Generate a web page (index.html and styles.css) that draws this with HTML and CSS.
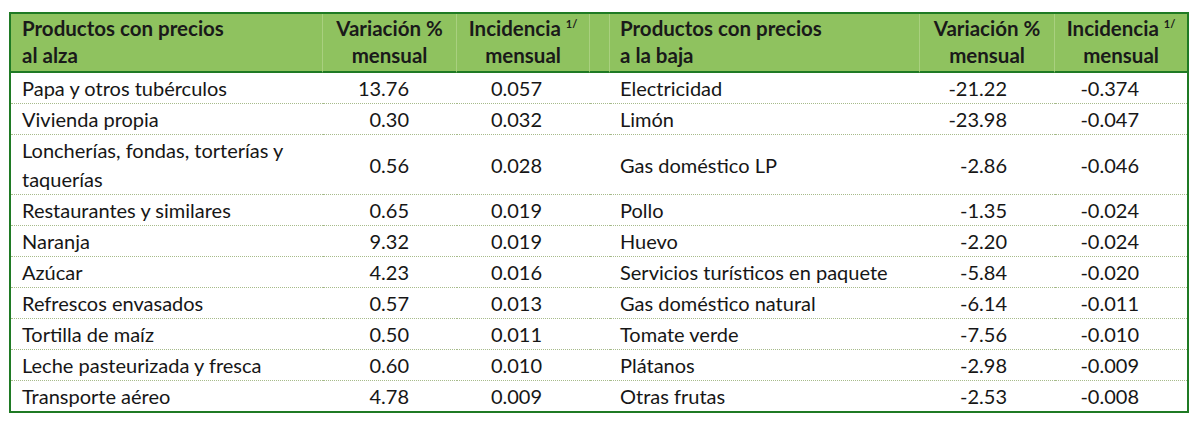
FILE: index.html
```html
<!DOCTYPE html>
<html lang="es">
<head>
<meta charset="utf-8">
<title>Productos con precios al alza y a la baja</title>
<link rel="stylesheet" href="styles.css">
</head>
<body>
<table class="tabla">
  <colgroup>
    <col class="c-prod">
    <col class="c-var">
    <col class="c-inc">
    <col class="c-gap">
    <col class="c-prod2">
    <col class="c-var2">
    <col class="c-inc2">
  </colgroup>
  <thead>
    <tr>
      <th class="h-left">Productos con precios<br>al alza</th>
      <th>Variación %<br>mensual</th>
      <th>Incidencia <sup>1/</sup><br>mensual</th>
      <th class="h-gap"></th>
      <th class="h-left">Productos con precios<br>a la baja</th>
      <th>Variación %<br>mensual</th>
      <th class="h-last">Incidencia <sup>1/</sup><br>mensual</th>
    </tr>
  </thead>
  <tbody>
    <tr><td class="p">Papa y otros tubérculos</td><td class="n">13.76</td><td class="n">0.057</td><td></td><td class="p">Electricidad</td><td class="n">-21.22</td><td class="n">-0.374</td></tr>
    <tr><td class="p">Vivienda propia</td><td class="n">0.30</td><td class="n">0.032</td><td></td><td class="p">Limón</td><td class="n">-23.98</td><td class="n">-0.047</td></tr>
    <tr><td class="p">Loncherías, fondas, torterías y<br>taquerías</td><td class="n">0.56</td><td class="n">0.028</td><td></td><td class="p">Gas doméstico LP</td><td class="n">-2.86</td><td class="n">-0.046</td></tr>
    <tr><td class="p">Restaurantes y similares</td><td class="n">0.65</td><td class="n">0.019</td><td></td><td class="p">Pollo</td><td class="n">-1.35</td><td class="n">-0.024</td></tr>
    <tr><td class="p">Naranja</td><td class="n">9.32</td><td class="n">0.019</td><td></td><td class="p">Huevo</td><td class="n">-2.20</td><td class="n">-0.024</td></tr>
    <tr><td class="p">Azúcar</td><td class="n">4.23</td><td class="n">0.016</td><td></td><td class="p">Servicios turísticos en paquete</td><td class="n">-5.84</td><td class="n">-0.020</td></tr>
    <tr><td class="p">Refrescos envasados</td><td class="n">0.57</td><td class="n">0.013</td><td></td><td class="p">Gas doméstico natural</td><td class="n">-6.14</td><td class="n">-0.011</td></tr>
    <tr><td class="p">Tortilla de maíz</td><td class="n">0.50</td><td class="n">0.011</td><td></td><td class="p">Tomate verde</td><td class="n">-7.56</td><td class="n">-0.010</td></tr>
    <tr><td class="p">Leche pasteurizada y fresca</td><td class="n">0.60</td><td class="n">0.010</td><td></td><td class="p">Plátanos</td><td class="n">-2.98</td><td class="n">-0.009</td></tr>
    <tr class="last"><td class="p">Transporte aéreo</td><td class="n">4.78</td><td class="n">0.009</td><td></td><td class="p">Otras frutas</td><td class="n">-2.53</td><td class="n">-0.008</td></tr>
  </tbody>
</table>
</body>
</html>
```

FILE: styles.css
```css
html, body {
  margin: 0;
  padding: 0;
  background: #ffffff;
}

body {
  padding: 12px 0 0 9px;
  font-family: "Lato", "Open Sans", sans-serif;
  color: #161616;
}

.tabla {
  width: 1180px;
  table-layout: fixed;
  border-collapse: separate;
  border-spacing: 0;
  border: 2px solid #1f7a24;
  font-size: 20px;
}

.c-prod { width: 312px; }
.c-var { width: 134px; }
.c-inc { width: 133px; }
.c-gap { width: 20px; }
.c-prod2 { width: 310px; }
.c-var2 { width: 135px; }
.c-inc2 { width: 132px; }

thead th {
  background: #8fc25f;
  font-size: 20.5px;
  font-weight: 700;
  line-height: 27px;
  padding: 1px 0 2px;
  text-align: center;
  color: #1a1a1a;
  border-bottom: 2px solid #1f7a24;
  border-right: 1px solid #a9d07f;
  vertical-align: middle;
}

thead th.h-last {
  border-right: 0;
}

thead th.h-left {
  text-align: left;
  padding-left: 11px;
}

thead th:nth-child(5).h-left {
  padding-left: 10px;
}

thead sup {
  font-size: 11px;
  line-height: 0;
  vertical-align: 8px;
}

tbody td {
  line-height: 29px;
  padding: 1px 0 0;
  border-bottom: 1px dotted #a7bb8b;
  vertical-align: middle;
  white-space: nowrap;
}

tbody tr.last td {
  border-bottom: 0;
}

td.p {
  padding-left: 11px;
}

tbody td:nth-child(5).p {
  padding-left: 10px;
}

td.n {
  text-align: right;
  padding-right: 48px;
}
```
